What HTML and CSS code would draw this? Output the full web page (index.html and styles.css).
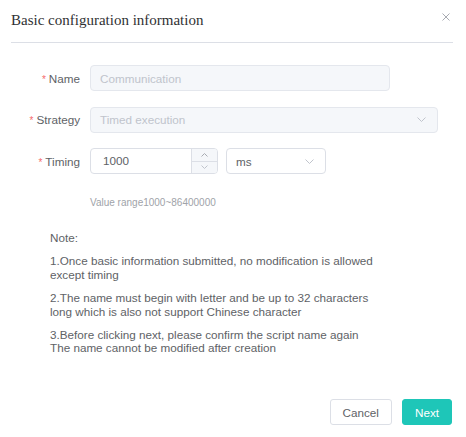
FILE: index.html
```html
<!DOCTYPE html>
<html>
<head>
<meta charset="utf-8">
<link rel="stylesheet" href="styles.css">
</head>
<body>
<div class="dialog">
  <div class="dialog-header">
    <span class="dialog-title">Basic configuration information</span>
    <span class="dialog-close"><svg width="8" height="8" viewBox="0 0 8 8"><path d="M0.5 0.5L7.5 7.5M7.5 0.5L0.5 7.5" stroke="#a8abb2" stroke-width="1" fill="none"/></svg></span>
  </div>
  <div class="form">
    <div class="form-row">
      <div class="form-label"><span class="req">*</span>Name</div>
      <div class="field field-disabled field-name"><span class="field-text">Communication</span></div>
    </div>
    <div class="form-row">
      <div class="form-label"><span class="req">*</span>Strategy</div>
      <div class="field field-disabled field-strategy"><span class="field-text">Timed execution</span><svg class="chev" width="9" height="5" viewBox="0 0 9 5"><path d="M0.5 0.5L4.5 4.5L8.5 0.5" stroke="#c0c4cc" stroke-width="1" fill="none"/></svg></div>
    </div>
    <div class="form-row">
      <div class="form-label"><span class="req">*</span>Timing</div>
      <div class="number-input">
        <span class="number-value">1000</span>
        <div class="spinner">
          <span class="spin-btn"><svg width="7" height="4" viewBox="0 0 7 4"><path d="M0.5 3.5L3.5 0.5L6.5 3.5" stroke="#a8abb2" stroke-width="1" fill="none"/></svg></span>
          <span class="spin-btn"><svg width="7" height="4" viewBox="0 0 7 4"><path d="M0.5 0.5L3.5 3.5L6.5 0.5" stroke="#c0c4cc" stroke-width="1" fill="none"/></svg></span>
        </div>
      </div>
      <div class="field field-unit"><span class="field-text">ms</span><svg class="chev" width="9" height="5" viewBox="0 0 9 5"><path d="M0.5 0.5L4.5 4.5L8.5 0.5" stroke="#c0c4cc" stroke-width="1" fill="none"/></svg></div>
    </div>
    <div class="hint">Value range1000~86400000</div>
  </div>
  <div class="note">
    <p>Note:</p>
    <p>1.Once basic information submitted, no modification is allowed except timing</p>
    <p>2.The name must begin with letter and be up to 32 characters long which is also not support Chinese character</p>
    <p>3.Before clicking next, please confirm the script name again<br>The name cannot be modified after creation</p>
  </div>
  <div class="footer">
    <button class="btn">Cancel</button>
    <button class="btn btn-primary">Next</button>
  </div>
</div>
</body>
</html>
```

FILE: styles.css
```css
body {
  margin: 0;
  background: #fff;
  font-family: "Liberation Sans", Arial, sans-serif;
  font-size: 11.7px;
  color: #606266;
}

.dialog {
  display: flex;
  flex-direction: column;
  min-height: 437px;
  box-sizing: border-box;
}

.dialog-header {
  display: flex;
  justify-content: space-between;
  align-items: flex-start;
  margin: 0 13px 0 11px;
  height: 42px;
  border-bottom: 1px solid #dcdfe6;
}

.dialog-title {
  font-family: "Liberation Serif", "Times New Roman", serif;
  font-size: 15px;
  line-height: 20px;
  color: #303133;
  margin-top: 10px;
}

.dialog-close {
  display: flex;
  margin-top: 13px;
  margin-right: 3px;
}

.form {
  margin-top: 22px;
}

.form-row {
  display: flex;
  align-items: center;
  height: 26px;
}

.form-row + .form-row {
  margin-top: 15.5px;
}

.form-label {
  width: 90px;
  box-sizing: border-box;
  padding-right: 10px;
  text-align: right;
  color: #606266;
}

.req {
  color: #f56c6c;
  font-size: 10px;
  margin-right: 3px;
}

.field {
  height: 26px;
  box-sizing: border-box;
  border: 1px solid #dcdfe6;
  border-radius: 4px;
  display: flex;
  align-items: center;
  justify-content: space-between;
  padding: 0 11px 0 9px;
  background: #fff;
  color: #606266;
}

.field-disabled {
  background: #f5f7fa;
  border-color: #e4e7ed;
  color: #c0c4cc;
}

.field-name {
  width: 300px;
}

.field-strategy {
  width: 348px;
}

.field-unit {
  width: 100px;
  margin-left: 8px;
}

.chev {
  display: block;
}

.number-input {
  width: 128px;
  height: 26px;
  box-sizing: border-box;
  border: 1px solid #dcdfe6;
  border-radius: 4px;
  display: flex;
  overflow: hidden;
}

.number-value {
  flex: 1;
  padding-left: 12px;
  line-height: 24px;
  color: #606266;
}

.spinner {
  width: 25px;
  display: flex;
  flex-direction: column;
  background: #f5f7fa;
  border-left: 1px solid #dcdfe6;
}

.spin-btn {
  flex: 1;
  display: flex;
  align-items: center;
  justify-content: center;
}

.spin-btn + .spin-btn {
  border-top: 1px solid #dcdfe6;
}

.hint {
  margin: 22px 0 0 90px;
  font-size: 10px;
  line-height: 14px;
  color: #a0a3a9;
}

.note {
  margin: 21px 0 0 50px;
  width: 330px;
  line-height: 13.4px;
  color: #606266;
}

.note p {
  margin: 0;
}

.note p + p {
  margin-top: 10px;
}

.footer {
  margin-top: auto;
  display: flex;
  justify-content: flex-end;
  gap: 10px;
  padding: 0 14px 12px 0;
}

.btn {
  height: 26px;
  padding: 0 12px;
  border: 1px solid #dcdfe6;
  border-radius: 3px;
  background: #fff;
  color: #606266;
  font: inherit;
}

.btn-primary {
  background: #1ec6b8;
  border-color: #1ec6b8;
  color: #fff;
}
```
